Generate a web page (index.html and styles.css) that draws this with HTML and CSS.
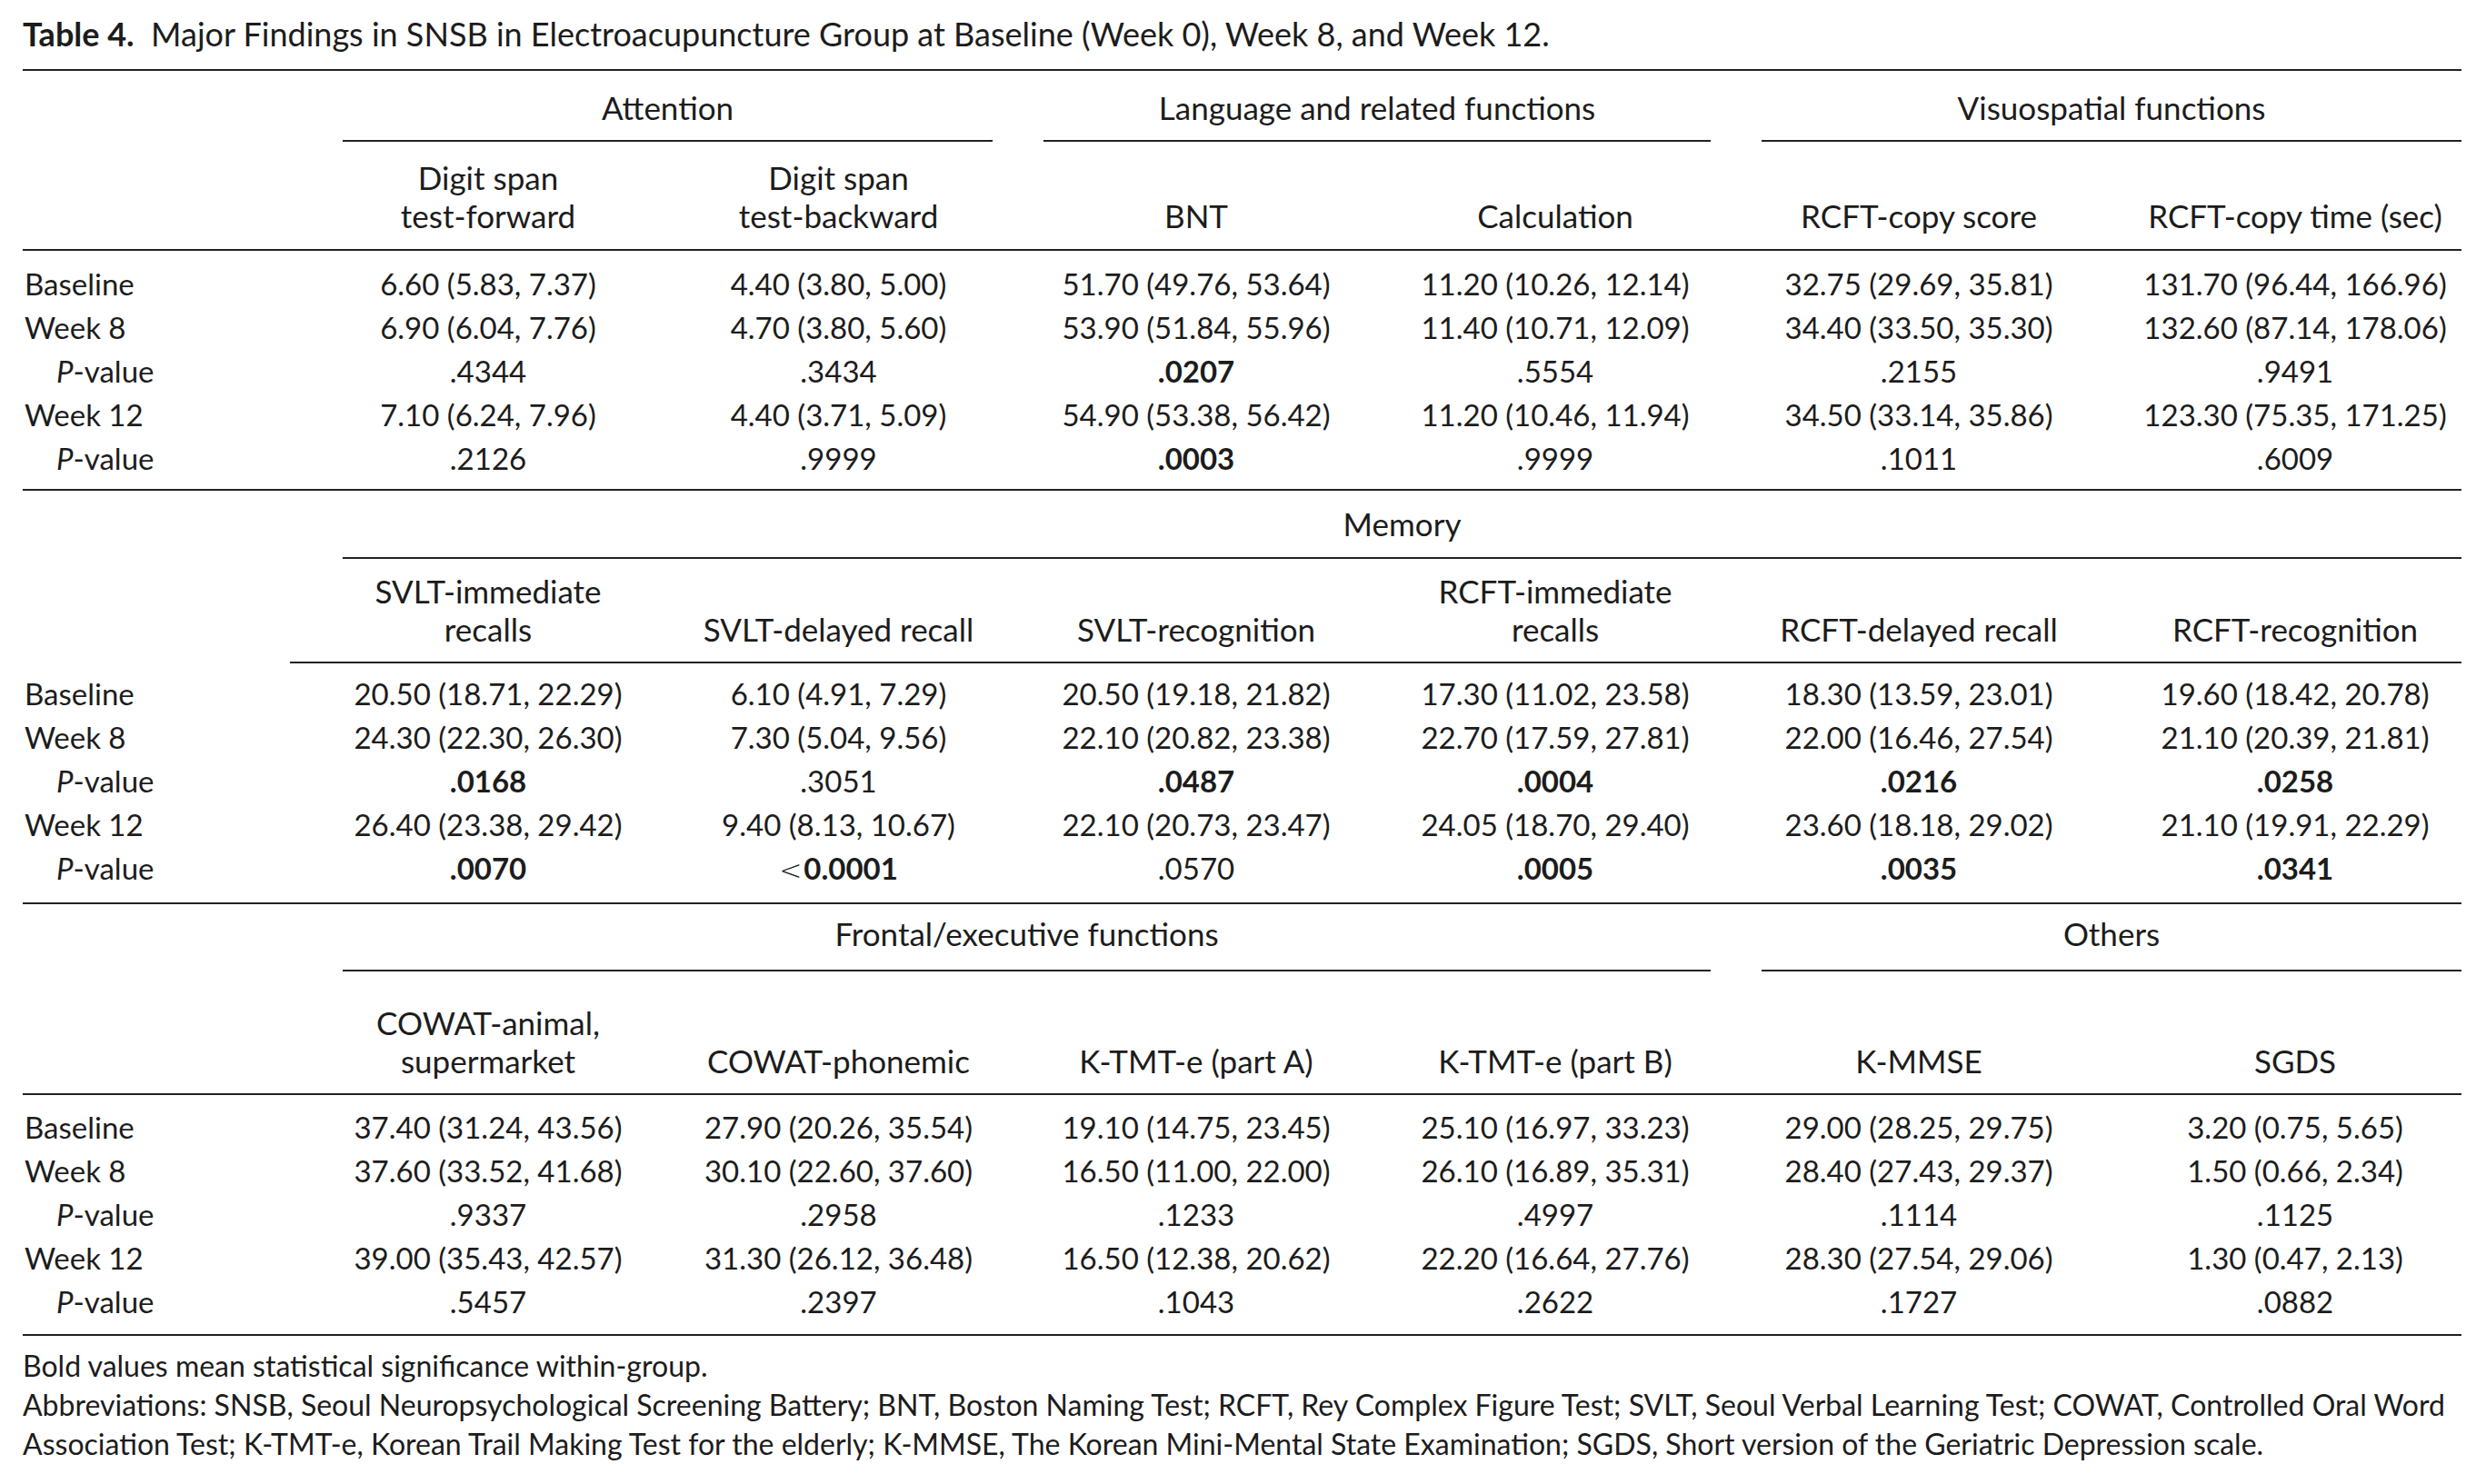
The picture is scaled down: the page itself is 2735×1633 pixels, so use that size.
FILE: index.html
```html
<!DOCTYPE html>
<html lang="en">
<head>
<meta charset="utf-8">
<title>Table 4</title>
<link rel="stylesheet" href="styles.css">
</head>
<body>
<div class="page">
  <p class="caption"><b>Table 4.</b>&nbsp; Major Findings in SNSB in Electroacupuncture Group at Baseline (Week 0), Week 8, and Week 12.</p>
  <table class="findings">
    <colgroup>
      <col class="c-stub"><col class="c1"><col class="c2"><col class="c3"><col class="c4"><col class="c5"><col class="c6">
    </colgroup>
    <tbody class="sec s1">
      <tr class="grp">
        <th class="stub"></th>
        <th colspan="2"><span class="grp-label">Attention</span></th>
        <th colspan="2"><span class="grp-label">Language and related functions</span></th>
        <th colspan="2" class="grp-end"><span class="grp-label">Visuospatial functions</span></th>
      </tr>
      <tr class="sub">
        <th class="stub"></th>
        <th>Digit span<br>test-forward</th>
        <th>Digit span<br>test-backward</th>
        <th>BNT</th>
        <th>Calculation</th>
        <th>RCFT-copy score</th>
        <th>RCFT-copy time (sec)</th>
      </tr>
      <tr class="first">
        <td class="lab">Baseline</td><td>6.60 (5.83, 7.37)</td><td>4.40 (3.80, 5.00)</td><td>51.70 (49.76, 53.64)</td><td>11.20 (10.26, 12.14)</td><td>32.75 (29.69, 35.81)</td><td>131.70 (96.44, 166.96)</td>
      </tr>
      <tr>
        <td class="lab">Week 8</td><td>6.90 (6.04, 7.76)</td><td>4.70 (3.80, 5.60)</td><td>53.90 (51.84, 55.96)</td><td>11.40 (10.71, 12.09)</td><td>34.40 (33.50, 35.30)</td><td>132.60 (87.14, 178.06)</td>
      </tr>
      <tr>
        <td class="lab pv"><i>P</i>-value</td><td>.4344</td><td>.3434</td><td><b>.0207</b></td><td>.5554</td><td>.2155</td><td>.9491</td>
      </tr>
      <tr>
        <td class="lab">Week 12</td><td>7.10 (6.24, 7.96)</td><td>4.40 (3.71, 5.09)</td><td>54.90 (53.38, 56.42)</td><td>11.20 (10.46, 11.94)</td><td>34.50 (33.14, 35.86)</td><td>123.30 (75.35, 171.25)</td>
      </tr>
      <tr class="last">
        <td class="lab pv"><i>P</i>-value</td><td>.2126</td><td>.9999</td><td><b>.0003</b></td><td>.9999</td><td>.1011</td><td>.6009</td>
      </tr>
    </tbody>
    <tbody class="sec s2">
      <tr class="grp">
        <th class="stub"></th>
        <th colspan="6" class="grp-end"><span class="grp-label">Memory</span></th>
      </tr>
      <tr class="sub">
        <th class="stub stub-partial"></th>
        <th>SVLT-immediate<br>recalls</th>
        <th>SVLT-delayed recall</th>
        <th>SVLT-recognition</th>
        <th>RCFT-immediate<br>recalls</th>
        <th>RCFT-delayed recall</th>
        <th>RCFT-recognition</th>
      </tr>
      <tr class="first">
        <td class="lab">Baseline</td><td>20.50 (18.71, 22.29)</td><td>6.10 (4.91, 7.29)</td><td>20.50 (19.18, 21.82)</td><td>17.30 (11.02, 23.58)</td><td>18.30 (13.59, 23.01)</td><td>19.60 (18.42, 20.78)</td>
      </tr>
      <tr>
        <td class="lab">Week 8</td><td>24.30 (22.30, 26.30)</td><td>7.30 (5.04, 9.56)</td><td>22.10 (20.82, 23.38)</td><td>22.70 (17.59, 27.81)</td><td>22.00 (16.46, 27.54)</td><td>21.10 (20.39, 21.81)</td>
      </tr>
      <tr>
        <td class="lab pv"><i>P</i>-value</td><td><b>.0168</b></td><td>.3051</td><td><b>.0487</b></td><td><b>.0004</b></td><td><b>.0216</b></td><td><b>.0258</b></td>
      </tr>
      <tr>
        <td class="lab">Week 12</td><td>26.40 (23.38, 29.42)</td><td>9.40 (8.13, 10.67)</td><td>22.10 (20.73, 23.47)</td><td>24.05 (18.70, 29.40)</td><td>23.60 (18.18, 29.02)</td><td>21.10 (19.91, 22.29)</td>
      </tr>
      <tr class="last">
        <td class="lab pv"><i>P</i>-value</td><td><b>.0070</b></td><td><span class="lt">&lt;</span><b>0.0001</b></td><td>.0570</td><td><b>.0005</b></td><td><b>.0035</b></td><td><b>.0341</b></td>
      </tr>
    </tbody>
    <tbody class="sec s3">
      <tr class="grp">
        <th class="stub"></th>
        <th colspan="4"><span class="grp-label">Frontal/executive functions</span></th>
        <th colspan="2" class="grp-end"><span class="grp-label">Others</span></th>
      </tr>
      <tr class="sub">
        <th class="stub"></th>
        <th>COWAT-animal,<br>supermarket</th>
        <th>COWAT-phonemic</th>
        <th>K-TMT-e (part A)</th>
        <th>K-TMT-e (part B)</th>
        <th>K-MMSE</th>
        <th>SGDS</th>
      </tr>
      <tr class="first">
        <td class="lab">Baseline</td><td>37.40 (31.24, 43.56)</td><td>27.90 (20.26, 35.54)</td><td>19.10 (14.75, 23.45)</td><td>25.10 (16.97, 33.23)</td><td>29.00 (28.25, 29.75)</td><td>3.20 (0.75, 5.65)</td>
      </tr>
      <tr>
        <td class="lab">Week 8</td><td>37.60 (33.52, 41.68)</td><td>30.10 (22.60, 37.60)</td><td>16.50 (11.00, 22.00)</td><td>26.10 (16.89, 35.31)</td><td>28.40 (27.43, 29.37)</td><td>1.50 (0.66, 2.34)</td>
      </tr>
      <tr>
        <td class="lab pv"><i>P</i>-value</td><td>.9337</td><td>.2958</td><td>.1233</td><td>.4997</td><td>.1114</td><td>.1125</td>
      </tr>
      <tr>
        <td class="lab">Week 12</td><td>39.00 (35.43, 42.57)</td><td>31.30 (26.12, 36.48)</td><td>16.50 (12.38, 20.62)</td><td>22.20 (16.64, 27.76)</td><td>28.30 (27.54, 29.06)</td><td>1.30 (0.47, 2.13)</td>
      </tr>
      <tr class="last">
        <td class="lab pv"><i>P</i>-value</td><td>.5457</td><td>.2397</td><td>.1043</td><td>.2622</td><td>.1727</td><td>.0882</td>
      </tr>
    </tbody>
  </table>
  <div class="notes">
    <p>Bold values mean statistical significance within-group.</p>
    <p>Abbreviations: SNSB, Seoul Neuropsychological Screening Battery; BNT, Boston Naming Test; RCFT, Rey Complex Figure Test; SVLT, Seoul Verbal Learning Test; COWAT, Controlled Oral Word<br>Association Test; K-TMT-e, Korean Trail Making Test for the elderly; K-MMSE, The Korean Mini-Mental State Examination; SGDS, Short version of the Geriatric Depression scale.</p>
  </div>
</div>
</body>
</html>
```

FILE: styles.css
```css
html, body {
  margin: 0;
  padding: 0;
  background: #ffffff;
}

body {
  font-family: Lato, "Open Sans", "Liberation Sans", sans-serif;
  color: #1c1c1c;
}

.page {
  padding: 17px 0 0 25px;
  width: 2683px;
}

.caption {
  margin: 0 0 19px 0;
  font-size: 36px;
  line-height: 40px;
  white-space: nowrap;
}

.caption b {
  font-weight: 700;
}

.findings {
  width: 2683px;
  table-layout: fixed;
  border-collapse: separate;
  border-spacing: 0;
  border-top: 2px solid #222;
  font-size: 33px;
}

.c-stub { width: 324px; }
.c1 { width: 376px; }
.c2 { width: 395px; }
.c3 { width: 392px; }
.c4 { width: 398px; }
.c5 { width: 402px; }
.c6 { width: 396px; }

.findings th,
.findings td {
  padding: 0;
  font-weight: 400;
  text-align: center;
  white-space: nowrap;
}

.findings th {
  font-size: 35px;
}

/* group header rows */
.grp th {
  vertical-align: bottom;
  padding: 0 28px;
}

.grp th.stub {
  padding: 0;
}

.grp th.grp-end {
  padding-right: 0;
}

.grp-label {
  display: block;
  line-height: 40px;
  border-bottom: 2px solid #222;
}

.s1 .grp th { padding-top: 20px; }
.s1 .grp-label { padding-bottom: 16px; }
.s2 .grp th { padding-top: 16px; }
.s2 .grp-label { padding-bottom: 17px; }
.s3 .grp th { padding-top: 12px; }
.s3 .grp-label { padding-bottom: 20px; }

/* sub header rows */
.sub th {
  vertical-align: bottom;
  line-height: 42px;
  border-bottom: 2px solid #222;
}

.sub th:last-child {
  padding-left: 30px;
}

.s1 .sub th { padding-top: 18px; padding-bottom: 16px; }
.s2 .sub th { padding-top: 14px; padding-bottom: 15px; }
.s3 .sub th { padding-top: 35px; padding-bottom: 15px; }

.sub th.stub-partial {
  border-bottom: 2px solid transparent;
  background: linear-gradient(#222, #222) right bottom / 30px 2px no-repeat;
  background-origin: border-box;
  background-clip: border-box;
}

/* data rows */
.findings td {
  line-height: 48px;
  vertical-align: top;
}

.findings td:last-child {
  padding-left: 30px;
}

.findings td.lab {
  text-align: left;
  padding-left: 2px;
}

.findings td.lab.pv {
  padding-left: 37px;
}

.findings td b {
  font-weight: 700;
}

.lt {
  font-family: "DejaVu Sans", sans-serif;
  font-size: 30px;
  font-weight: 300;
  line-height: 0;
  margin-right: 2px;
}

.s1 .first td { padding-top: 12px; }
.s1 .last td { padding-bottom: 10px; }
.s2 .first td { padding-top: 9px; }
.s2 .last td { padding-bottom: 14px; }
.s3 .first td { padding-top: 11px; }
.s3 .last td { padding-bottom: 12px; }

.last td {
  border-bottom: 2px solid #222;
}

/* footnotes */
.notes {
  margin-top: 11px;
  font-size: 32px;
  line-height: 43px;
}

.notes p {
  margin: 0;
  white-space: nowrap;
}
```
